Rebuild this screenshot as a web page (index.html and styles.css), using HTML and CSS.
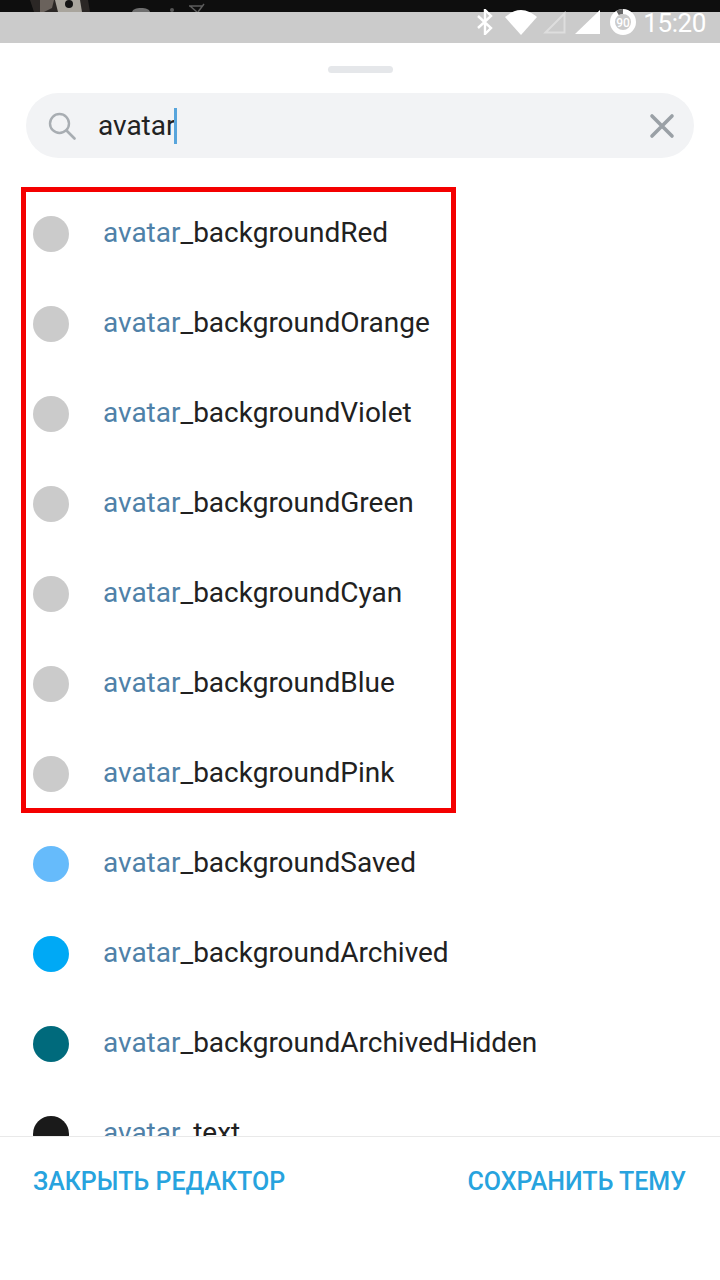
FILE: index.html
```html
<!DOCTYPE html>
<html lang="en">
<head>
    <meta charset="UTF-8">
    <meta name="viewport" content="width=device-width, initial-scale=1.0">
    <title>Theme Editor</title>
    <link rel="stylesheet" href="styles.css">
</head>
<body>
    <div class="screen">
        <!-- Dark strip of the app behind the sheet -->
        <div class="backdrop">
            <svg class="backdrop-photo" width="240" height="12" viewBox="0 0 240 12">
                <path d="M30 0h58l2 12H34z" fill="#2b2725"/>
                <path d="M40 0h14l-2 8-8 4h-4z" fill="#6a625c"/>
                <path d="M55 0h25l2 12H58z" fill="#a9a59d"/>
                <circle cx="69" cy="4" r="4" fill="#141414"/>
                <path d="M132 12c1-3 4-4 9-4s8 1 9 4z" fill="#6e6e6e"/>
                <circle cx="172" cy="10" r="2" fill="#555"/>
                <path d="M190 6l7 6m7-8l-6 8m-9-6h14" stroke="#5c5c5c" stroke-width="1.5" fill="none"/>
            </svg>
        </div>
        <div class="status-bar"></div>

        <!-- Status icons hang over both strips -->
        <div class="status-icons">
            <svg width="16" height="26" viewBox="0 0 16 26"><path d="M1 7l13 12-6 6V1l6 6L1 19" fill="none" stroke="#fff" stroke-width="2.4"/></svg>
            <svg class="icon-wifi" width="32" height="25" viewBox="0 0 32 25"><path d="M0 7C5 3 10 0 16 0s11 3 16 7L16 25z" fill="#fff"/></svg>
            <svg class="icon-sim" width="24" height="24" viewBox="0 0 24 24"><path d="M22.5 3.5v19H3.5z" fill="none" stroke="#dedede" stroke-width="2"/></svg>
            <svg class="icon-sim2" width="25" height="24" viewBox="0 0 25 24"><path d="M25 0v24H0z" fill="#fff"/></svg>
            <svg class="icon-battery" width="26" height="26" viewBox="0 0 26 26">
                <circle cx="13" cy="13" r="10.5" fill="none" stroke="#fff" stroke-width="5"/>
                <path d="M7.5 3.9A10.5 10.5 0 0 1 13 2.5" fill="none" stroke="#666" stroke-width="5"/>
                <text x="13" y="17.5" text-anchor="middle" class="battery-text">90</text>
            </svg>
            <span class="clock">15:20</span>
        </div>

        <div class="sheet">
            <div class="handle"></div>

            <div class="search">
                <svg class="search-icon" width="28" height="28" viewBox="0 0 28 28">
                    <circle cx="11.5" cy="11.5" r="9.5" fill="none" stroke="#a8adb2" stroke-width="2.4"/>
                    <path d="M18.5 18.5l8 8" stroke="#a8adb2" stroke-width="2.6" stroke-linecap="round"/>
                </svg>
                <div class="search-text">avatar<span class="caret"></span></div>
                <svg class="clear-icon" width="26" height="26" viewBox="0 0 26 26">
                    <path d="M3 3l20 20M23 3L3 23" stroke="#9aa0a6" stroke-width="3.6" stroke-linecap="round"/>
                </svg>
            </div>

            <div class="list">
                <div class="row"><span class="dot"></span><span class="name"><em>avatar</em>_backgroundRed</span></div>
                <div class="row"><span class="dot"></span><span class="name"><em>avatar</em>_backgroundOrange</span></div>
                <div class="row"><span class="dot"></span><span class="name"><em>avatar</em>_backgroundViolet</span></div>
                <div class="row"><span class="dot"></span><span class="name"><em>avatar</em>_backgroundGreen</span></div>
                <div class="row"><span class="dot"></span><span class="name"><em>avatar</em>_backgroundCyan</span></div>
                <div class="row"><span class="dot"></span><span class="name"><em>avatar</em>_backgroundBlue</span></div>
                <div class="row"><span class="dot"></span><span class="name"><em>avatar</em>_backgroundPink</span></div>
                <div class="row"><span class="dot dot-saved"></span><span class="name"><em>avatar</em>_backgroundSaved</span></div>
                <div class="row"><span class="dot dot-archived"></span><span class="name"><em>avatar</em>_backgroundArchived</span></div>
                <div class="row"><span class="dot dot-hidden"></span><span class="name"><em>avatar</em>_backgroundArchivedHidden</span></div>
                <div class="row"><span class="dot dot-text"></span><span class="name"><em>avatar</em>_text</span></div>
                <!-- Red annotation drawn on top of the screenshot -->
                <div class="highlight"></div>
            </div>

            <div class="footer">
                <span class="action">Закрыть редактор</span>
                <span class="action">Сохранить тему</span>
            </div>
        </div>
    </div>
</body>
</html>
```

FILE: styles.css
```css
html, body {
    margin: 0;
    padding: 0;
    background-color: #fff;
}
.screen {
    position: relative;
    width: 720px;
    height: 1280px;
    display: flex;
    flex-direction: column;
    overflow: hidden;
    font-family: Roboto, sans-serif;
}
.backdrop {
    height: 12px;
    background-color: #0e0e0e;
    flex: none;
}
.backdrop-photo {
    display: block;
}
.status-bar {
    height: 31px;
    background-color: #cbcbcb;
    flex: none;
}
.status-icons {
    position: absolute;
    top: 8px;
    right: 14px;
    height: 28px;
    display: flex;
    align-items: center;
}
.status-icons svg {
    display: block;
    flex: none;
}
.icon-wifi {
    margin-left: 12px;
}
.icon-sim {
    margin-left: 5px;
}
.icon-sim2 {
    margin-left: 9px;
}
.icon-battery {
    margin-left: 10px;
}
.battery-text {
    font-size: 12px;
    font-weight: 500;
    fill: #fff;
}
.clock {
    margin-left: 7px;
    margin-top: 2px;
    color: #fff;
    font-size: 26px;
    line-height: 28px;
    letter-spacing: -0.4px;
}
.sheet {
    flex: 1;
    min-height: 0;
    display: flex;
    flex-direction: column;
    background-color: #fff;
}
.handle {
    width: 65px;
    height: 7px;
    margin: 23px auto 0;
    border-radius: 4px;
    background-color: #e5e7ea;
    flex: none;
}
.search {
    height: 65px;
    margin: 20px 26px 0;
    padding: 0 19px 0 22px;
    display: flex;
    align-items: center;
    border-radius: 33px;
    background-color: #f2f3f5;
    flex: none;
}
.search-text {
    flex: 1;
    margin-left: 22px;
    font-size: 28px;
    color: #222;
    display: flex;
    align-items: center;
}
.caret {
    width: 3px;
    height: 36px;
    margin-left: -2px;
    background-color: #58a5dc;
}
.list {
    position: relative;
    height: 978px;
    padding-top: 31px;
    box-sizing: border-box;
    overflow: hidden;
    flex: none;
}
.row {
    height: 90px;
    padding-left: 33px;
    display: flex;
    align-items: center;
}
.dot {
    width: 36px;
    height: 36px;
    border-radius: 50%;
    background-color: #cbcbcb;
    flex: none;
}
.dot-saved {
    background-color: #66bbfb;
}
.dot-archived {
    background-color: #00a9f5;
}
.dot-hidden {
    background-color: #006a7c;
}
.dot-text {
    background-color: #1a1a1a;
}
.name {
    margin-left: 34px;
    margin-top: -4px;
    font-size: 28px;
    color: #212121;
}
.name em {
    font-style: normal;
    color: #4f81a8;
}
.highlight {
    position: absolute;
    left: 21px;
    top: 29px;
    width: 435px;
    height: 626px;
    box-sizing: border-box;
    border: 5px solid #f40000;
}
.footer {
    height: 144px;
    padding: 0 34px 54px 33px;
    box-sizing: border-box;
    display: flex;
    justify-content: space-between;
    align-items: center;
    border-top: 1px solid #e9e9e9;
    flex: none;
}
.action {
    font-size: 25px;
    font-weight: 500;
    text-transform: uppercase;
    color: #27a3de;
}
```
